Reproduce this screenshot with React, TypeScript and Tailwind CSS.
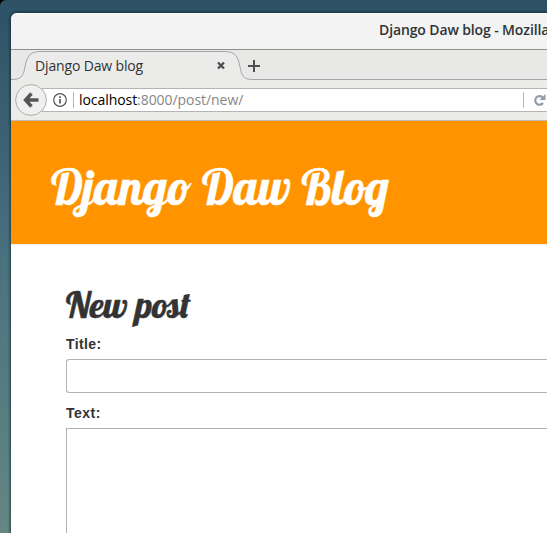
import React from "react";

function TitleBar() {
  return (
    <div className="h-[37px] shrink-0 rounded-tl-[6px] border-b border-[#8f8f8d] bg-[#f3f3f3] pl-[368px] pt-[7px] shadow-[inset_0_1px_0_#ffffff]">
      <span className="block whitespace-nowrap font-['Open_Sans','Noto_Sans',sans-serif] text-[14px] font-semibold leading-[20px] tracking-[-0.12px] text-[#2e3436]">
        Django Daw blog - Mozilla Firefox
      </span>
    </div>
  );
}

function TabStrip() {
  return (
    <div className="relative h-[30px] shrink-0 bg-[#e8e8e7]">
      <svg className="absolute left-0 top-0" width="536" height="30" fill="none">
        <path
          d="M0 29.5C9 29.5 12 28 14 17C16 5 20 1.5 30 1.5H213C223 1.5 227 5 229 17C231 28 234 29.5 243 29.5V30H0Z"
          fill="#ebebea"
        />
        <path
          d="M0 29.5C9 29.5 12 28 14 17C16 5 20 1.5 30 1.5H213C223 1.5 227 5 229 17C231 28 234 29.5 243 29.5H536"
          stroke="#a1a5a9"
        />
        <path d="M207 12.5L213 18.5M213 12.5L207 18.5" stroke="#4b4f50" strokeWidth="2.3" />
        <path d="M243 10V22M237 16H249" stroke="#50504f" strokeWidth="2" />
      </svg>
      <span className="relative block whitespace-nowrap pl-6 pt-[6px] font-['Open_Sans','Noto_Sans',sans-serif] text-[14px] leading-[20px] tracking-[-0.15px] text-[#2e3436]">
        Django Daw blog
      </span>
    </div>
  );
}

function AddressBar() {
  return (
    <div className="relative flex h-[41px] shrink-0 border-b border-[#bdbab7] bg-[#ebebea] pl-5 pt-2">
      <div className="flex h-6 flex-1 items-center border-y border-[#b4b4b4] bg-white pl-[22px]">
        <svg width="14" height="14" viewBox="0 0 14 14" fill="none" className="shrink-0">
          <circle cx="7" cy="7" r="6.3" stroke="#555" strokeWidth="1.2" />
          <path d="M7 6V10.5M7 3.3V5" stroke="#555" strokeWidth="1.7" />
        </svg>
        <div className="ml-[6px] h-4 w-px bg-[#b5b5b5]" />
        <span className="ml-[5px] whitespace-nowrap font-['Open_Sans','Noto_Sans',sans-serif] text-[14px] leading-[20px] tracking-[-0.06px] text-[#868686]">
          <span className="text-black">localhost</span>:8000/post/new/
        </span>
        <div className="ml-auto h-4 w-px bg-[#b5b5b5]" />
        <svg width="23" height="20" viewBox="0 0 23 20" fill="none" className="shrink-0">
          <path d="M18.4 7.2A4.3 4.3 0 1 0 19 13" stroke="#8e9cab" strokeWidth="2.2" />
          <path d="M21.5 4V10H15.5Z" fill="#8e9cab" />
        </svg>
      </div>
      <svg className="absolute left-1 top-1" width="32" height="32" fill="none">
        <circle cx="16" cy="16" r="15.4" fill="#f0f0ef" stroke="#adadad" />
        <path d="M16.5 9.5L10.5 16L16.5 22.5M11 16H23.5" stroke="#555" strokeWidth="3.4" />
      </svg>
    </div>
  );
}

export default function App() {
  return (
    <div className="h-[533px] w-full overflow-hidden bg-black">
      <div className="h-full rounded-tl-[6px] bg-linear-to-b from-[#2d5266] via-[#4b727f] via-50% to-[#648783] pl-[11px] pt-[13px]">
        <div className="flex h-[520px] flex-col overflow-hidden rounded-tl-[6px] bg-white shadow-[0_0_3px_1px_rgba(0,25,35,0.6)]">
          <TitleBar />
          <TabStrip />
          <AddressBar />
          <header className="h-[124px] shrink-0 border-b border-[#eeeeee] bg-[#ff9400] pl-[40px] pt-[36px]">
            <h1 className="whitespace-nowrap font-['Lobster','Liberation_Serif',serif] text-[48px] leading-[60px] text-white [-webkit-text-stroke:0.4px_#fff]">
              Django Daw Blog
            </h1>
          </header>
          <main className="flex-1 pl-[55px] pt-[33px] font-['Liberation_Sans',sans-serif] text-[14px] font-bold leading-[20px] text-[#333]">
            <h2 className="mb-[2px] whitespace-nowrap font-['Lobster','Liberation_Serif',serif] text-[36px] font-normal leading-[54px] [-webkit-text-stroke:0.5px_#333]">
              New post
            </h2>
            <label className="block tracking-[0.4px]">Title:</label>
            <div className="mt-[5px] h-[34px] rounded-l-[3px] border border-r-0 border-[#b2b2b2]" />
            <label className="mt-[10px] block tracking-[0.5px]">Text:</label>
            <div className="mt-[5px] h-[120px] border-l border-t border-[#b2b2b2]" />
          </main>
        </div>
      </div>
    </div>
  );
}
